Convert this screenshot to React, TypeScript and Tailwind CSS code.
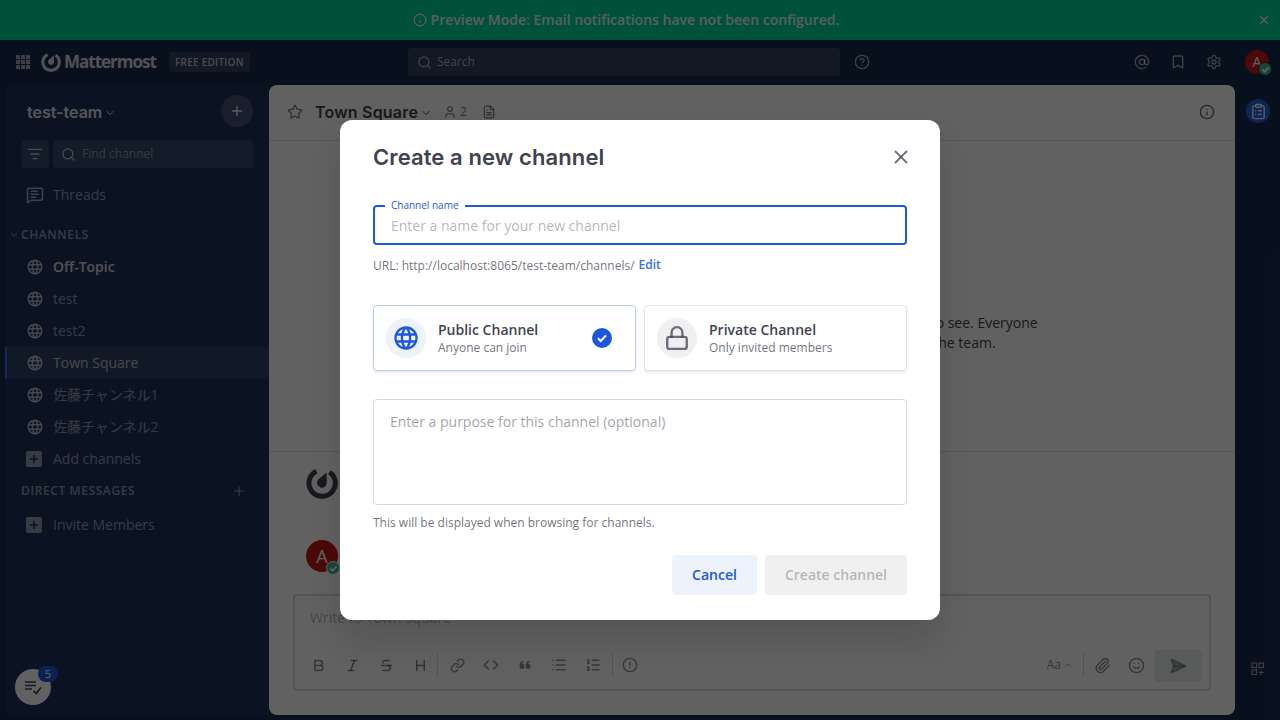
import { AtSign, Bold, Bookmark, ChevronDown, ChevronUp, CircleAlert, CircleHelp, ClipboardList, Code, FileText, Heading, Info, Italic, Link, List, ListFilter, ListOrdered, Lock, MessageSquareText, Paperclip, Plus, Search, SendHorizontal, Settings, Smile, Star, Strikethrough, User, X } from 'lucide-react';
import { MdFormatQuote } from 'react-icons/md';

const GLOBE = 'M16.36,14C16.44,13.34 16.5,12.68 16.5,12C16.5,11.32 16.44,10.66 16.36,10H19.74C19.9,10.64 20,11.31 20,12C20,12.69 19.9,13.36 19.74,14M14.59,19.56C15.19,18.45 15.65,17.25 15.97,16H18.92C17.96,17.65 16.43,18.93 14.59,19.56M14.34,14H9.66C9.56,13.34 9.5,12.68 9.5,12C9.5,11.32 9.56,10.65 9.66,10H14.34C14.43,10.65 14.5,11.32 14.5,12C14.5,12.68 14.43,13.34 14.34,14M12,19.96C11.17,18.76 10.5,17.43 10.09,16H13.91C13.5,17.43 12.83,18.76 12,19.96M8,8H5.08C6.03,6.34 7.57,5.06 9.4,4.44C8.8,5.55 8.35,6.75 8,8M5.08,16H8C8.35,17.25 8.8,18.45 9.4,19.56C7.57,18.93 6.03,17.65 5.08,16M4.26,14C4.1,13.36 4,12.69 4,12C4,11.31 4.1,10.64 4.26,10H7.64C7.56,10.66 7.5,11.32 7.5,12C7.5,12.68 7.56,13.34 7.64,14M12,4.03C12.83,5.23 13.5,6.57 13.91,8H10.09C10.5,6.57 11.17,5.23 12,4.03M18.92,8H15.97C15.65,6.75 15.19,5.55 14.59,4.44C16.43,5.07 17.96,6.34 18.92,8M12,2C6.47,2 2,6.5 2,12A10,10 0 0,0 12,22A10,10 0 0,0 22,12A10,10 0 0,0 12,2Z';

const Globe = ({ size, className }: { size: number; className?: string }) => (
    <svg width={size} height={size} viewBox="0 0 24 24" fill="currentColor" className={className}>
        <path d={GLOBE} />
    </svg>
);

// ring with a gap at the top, drop in the middle
const MattermostLogo = ({ size, className }: { size: number; className?: string }) => (
    <svg width={size} height={size} viewBox="0 0 32 32" fill="none" className={className}>
        <path d="M10.5 4.2 A13.2 13.2 0 1 0 23.5 5.2" stroke="currentColor" strokeWidth="5" strokeLinecap="butt" />
        <path d="M20.5 5.5 L20.8 15 A4.9 4.9 0 1 1 12.2 12.6 Z" fill="currentColor" />
    </svg>
);

const AppsGrid = () => (
    <svg width="14" height="14" viewBox="0 0 14 14" fill="currentColor">
        {[0, 5, 10].map((y) => [0, 5, 10].map((x) => <rect key={`${x}-${y}`} x={x} y={y} width="4" height="4" rx="0.5" />))}
    </svg>
);

const AppsPlus = () => (
    <svg width="14" height="14" viewBox="0 0 14 14" fill="none" stroke="currentColor" strokeWidth="1.1">
        <rect x="1" y="1" width="4.5" height="4.5" />
        <rect x="8" y="1" width="4.5" height="4.5" />
        <rect x="1" y="8" width="4.5" height="4.5" />
        <path d="M10.2 8v5M7.8 10.5h5" />
    </svg>
);

const TodoIcon = () => (
    <svg width="20" height="20" viewBox="0 0 20 20" fill="none" stroke="currentColor" strokeWidth="1.6">
        <path d="M2 5h11M2 8.5h11M2 12h7" />
        <path d="M10.5 14l2.6 2.6L18 10.5" />
    </svg>
);

const StatusCheck = ({ className }: { className: string }) => (
    <span className={`absolute w-[14px] h-[14px] rounded-full bg-[#3db887] border flex items-center justify-center ${className}`}>
        <svg width="9" height="9" viewBox="0 0 10 10" fill="none" stroke="#fff" strokeWidth="2"><path d="M1.5 5l2.5 2.5 4.5-5" /></svg>
    </span>
);

const PlusBox = () => (
    <span className="w-4 h-4 rounded-[2px] bg-white/50 flex items-center justify-center text-[#1e325c]">
        <Plus size={12} strokeWidth={3} />
    </span>
);

const channels = ['Off-Topic', 'test', 'test2', 'Town Square', '佐藤チャンネル1', '佐藤チャンネル2'];

const Sidebar = () => (
    <div className="w-[264px] ml-[5px] bg-[#1e325c] rounded-tl-lg rounded-bl-lg flex flex-col relative text-white/50 text-sm">
        <div className="h-[54px] flex items-center justify-between pl-[22px] pr-[16px]">
            <div className="flex items-center gap-[2px] text-white/85 text-[16px] font-semibold font-['Inter',sans-serif]">
                test-team <ChevronDown size={12} strokeWidth={2} className="mt-[2px]" />
            </div>
            <div className="w-8 h-8 rounded-full bg-white/15 flex items-center justify-center text-white/90 mt-[-2px]">
                <Plus size={16} />
            </div>
        </div>
        <div className="flex gap-1 pl-4 pr-4 mt-[1px]">
            <div className="w-7 h-7 rounded bg-white/10 flex items-center justify-center text-white/70">
                <ListFilter size={16} />
            </div>
            <div className="flex-1 h-7 rounded bg-white/10 flex items-center gap-[6px] pl-2 text-xs text-white/45">
                <Search size={15} className="text-white/70" /> Find channel
            </div>
        </div>
        <div className="h-8 mt-[11px] flex items-center pl-[21px] gap-[9px]">
            <MessageSquareText size={18} className="text-white/60" />
            <span>Threads</span>
        </div>
        <div className="h-[22px] mt-[13px] flex items-center pl-[4px] text-xs font-semibold tracking-[0.6px]">
            <ChevronDown size={10} strokeWidth={2.5} className="mr-[2px]" /> CHANNELS
        </div>
        <div className="flex flex-col mt-[5px]">
            {channels.map((name) => (
                <div
                    key={name}
                    className={`h-8 flex items-center gap-[9px] ${name === 'Town Square' ? 'bg-white/8 border-l-2 border-[#386fe5] pl-[19px] text-white/65' : 'pl-[21px]'} ${name === 'Off-Topic' ? 'font-semibold text-white/80' : ''}`}
                >
                    <Globe size={18} className="text-white/65" />
                    <span className="mt-[-1px]">{name}</span>
                </div>
            ))}
            <div className="h-8 flex items-center pl-[21px] gap-[11px]">
                <PlusBox /> <span>Add channels</span>
            </div>
        </div>
        <div className="h-8 flex items-center justify-between pl-[16px] pr-[22px] text-xs font-semibold tracking-[0.6px]">
            DIRECT MESSAGES <Plus size={16} strokeWidth={1.5} />
        </div>
        <div className="h-8 mt-[2px] flex items-center pl-[21px] gap-[11px]">
            <PlusBox /> <span>Invite Members</span>
        </div>
        <div className="absolute left-[10px] bottom-[10px] w-9 h-9 rounded-full bg-white flex items-center justify-center text-[#3f4350]">
            <TodoIcon />
            <span className="absolute left-[23px] top-[-3px] w-5 h-4 rounded-full bg-[#1c58d9] text-white text-[11px] flex items-center justify-center">5</span>
        </div>
    </div>
);

const toolGroupA = [Bold, Italic, Strikethrough, Heading];

const Composer = () => (
    <div className="mx-6 mb-6 h-[97px] shrink-0 border-2 border-[#3f4350]/20 rounded flex flex-col justify-between pb-[7px] pl-[6px] pr-[7px]">
        <div className="pt-[12px] pl-[9px] text-sm text-[#3f4350]/40">Write to Town Square</div>
        <div className="flex items-center h-8 text-[#3f4350]/60">
            <div className="flex-1 flex items-center mb-[2px]">
                {toolGroupA.map((Icon, i) => (
                    <span key={i} className="w-[34px] flex justify-center"><Icon size={15} strokeWidth={2.5} /></span>
                ))}
                <span className="w-px h-6 bg-[#3f4350]/20" />
                <span className="ml-[2px] w-[34px] flex justify-center"><Link size={15} strokeWidth={2.2} /></span>
                <span className="w-[34px] flex justify-center"><Code size={16} strokeWidth={2.2} /></span>
                <span className="w-[34px] flex justify-center"><MdFormatQuote size={18} className="rotate-180" /></span>
                <span className="w-[34px] flex justify-center"><List size={16} strokeWidth={2.2} /></span>
                <span className="w-[34px] flex justify-center"><ListOrdered size={16} strokeWidth={2.2} /></span>
                <span className="ml-[2px] w-px h-6 bg-[#3f4350]/20" />
                <span className="w-[34px] flex justify-center"><CircleAlert size={16} /></span>
                <div className="flex-1" />
                <span className="text-xs mr-[2px]">Aa</span>
                <ChevronUp size={10} />
                <span className="w-px h-6 bg-[#3f4350]/20 ml-[10px]" />
                <span className="w-[36px] flex justify-center"><Paperclip size={17} /></span>
                <span className="w-[32px] flex justify-center"><Smile size={17} /></span>
            </div>
            <span className="w-12 h-8 ml-[2px] rounded bg-[#3f4350]/10 flex items-center justify-center text-[#3f4350]/40">
                <SendHorizontal size={18} fill="currentColor" />
            </span>
        </div>
    </div>
);

const CenterChannel = () => (
    <div className="flex-1 min-w-0 bg-white rounded-lg flex flex-col overflow-hidden text-[#3f4350]">
        <div className="h-[56px] shrink-0 border-b border-[#3f4350]/15 flex items-center pl-[18px] pr-[20px] pb-[1px]">
            <Star size={16} className="text-[#3f4350]/70" />
            <span className="ml-[12px] text-[16px] font-semibold tracking-[0.2px] font-['Inter',sans-serif]">Town Square</span>
            <ChevronDown size={12} strokeWidth={2} className="ml-[2px] mt-[2px]" />
            <User size={14} className="ml-[11px] text-[#3f4350]/70" />
            <span className="ml-[3px] text-xs text-[#3f4350]/70">2</span>
            <FileText size={14} className="ml-[15px] text-[#3f4350]/70" />
            <div className="flex-1" />
            <Info size={16} className="text-[#3f4350]/80" />
        </div>
        <div className="h-[311px] shrink-0 border-b border-[#3f4350]/15 pl-[197px] pt-[172px] text-sm leading-5 whitespace-nowrap">
            <p>Welcome to Town Square! Post messages here that you want everyone to see. Everyone</p>
            <p className="ml-[-33px]">automatically becomes a permanent member of this channel when they join the team.</p>
        </div>
        <div className="flex-1 min-h-0 pl-[37px] pt-[15px] flex flex-col">
            <MattermostLogo size={32} className="text-[#3f4350]" />
            <div className="relative w-8 h-8 mt-[41px] rounded-full bg-[#c41a1a] text-white flex items-center justify-center text-[18px]">
                A
                <StatusCheck className="right-[-2px] bottom-[-3px] border-white" />
            </div>
        </div>
        <Composer />
    </div>
);

const Modal = () => (
    <div className="w-[600px] h-[500px] bg-white rounded-xl shadow-[0_20px_32px_rgba(0,0,0,0.12)] px-[33px] text-[#3f4350] flex flex-col">
        <div className="h-[75px] shrink-0 flex items-center justify-between">
            <h1 className="text-[22px] font-semibold font-['Inter',sans-serif] tracking-[0.1px]">Create a new channel</h1>
            <X size={22} className="text-[#3f4350]/75 mr-[-5px] mt-[-1px]" />
        </div>
        <div className="relative mt-[10px] h-10 shrink-0 border-2 border-[#1c58d9] rounded flex items-center pl-4 pt-[2px] text-sm text-[#3f4350]/40">
            Enter a name for your new channel
            <span className="absolute left-[10px] top-[-9px] px-[6px] bg-white text-[10px] leading-[14px] text-[#1c58d9]">Channel name</span>
        </div>
        <div className="mt-[12px] h-[18px] flex items-center text-xs text-[#3f4350]/75">
            URL: http://localhost:8065/test-team/channels/
            <span className="ml-1 mt-[-2px] font-semibold text-[#386fe5]">Edit</span>
        </div>
        <div className="mt-[30px] grid grid-cols-2 gap-2 h-[66px] shrink-0">
            <div className="border border-[#1c58d9]/30 rounded shadow-[0_2px_3px_rgba(0,0,0,0.08)] flex items-center pl-3 pr-[23px]">
                <span className="w-10 h-10 rounded-full bg-[#1c58d9]/8 flex items-center justify-center text-[#1c58d9]">
                    <Globe size={28} />
                </span>
                <div className="ml-3 flex-1">
                    <div className="text-sm font-semibold leading-5">Public Channel</div>
                    <div className="text-xs leading-4 text-[#3f4350]/75">Anyone can join</div>
                </div>
                <span className="w-5 h-5 rounded-full bg-[#1c58d9] flex items-center justify-center">
                    <svg width="12" height="12" viewBox="0 0 12 12" fill="none" stroke="#fff" strokeWidth="2"><path d="M2 6.2l2.8 2.8L10 3.4" /></svg>
                </span>
            </div>
            <div className="border border-[#3f4350]/15 rounded shadow-[0_2px_3px_rgba(0,0,0,0.08)] flex items-center pl-3">
                <span className="w-10 h-10 rounded-full bg-[#3f4350]/8 flex items-center justify-center text-[#3f4350]/75">
                    <Lock size={26} strokeWidth={2.2} />
                </span>
                <div className="ml-3">
                    <div className="text-sm font-semibold leading-5">Private Channel</div>
                    <div className="text-xs leading-4 text-[#3f4350]/75">Only invited members</div>
                </div>
            </div>
        </div>
        <div className="mt-[28px] h-[106px] shrink-0 border border-[#3f4350]/20 rounded pl-4 pt-[12px] text-sm leading-5 text-[#3f4350]/50">
            Enter a purpose for this channel (optional)
        </div>
        <div className="mt-[10px] h-4 text-xs leading-4 text-[#3f4350]/75">This will be displayed when browsing for channels.</div>
        <div className="mt-6 flex justify-end gap-2 text-sm font-semibold">
            <div className="w-[85px] h-10 rounded bg-[#1c58d9]/8 text-[#1c58d9] flex items-center justify-center">Cancel</div>
            <div className="w-[142px] h-10 rounded bg-[#3f4350]/8 text-[#3f4350]/35 flex items-center justify-center">Create channel</div>
        </div>
    </div>
);

export default function App() {
    return (
        <div className="relative w-[1280px] h-[720px] overflow-hidden bg-[#192a4d] flex flex-col font-['Open_Sans','Noto_Sans_CJK_JP',sans-serif]">
            {/* Preview banner */}
            <div className="h-10 shrink-0 bg-[#00d596] flex items-center justify-center relative text-white text-sm font-semibold pr-[28px]">
                <span className="flex items-center gap-[4px] opacity-90">
                    <Info size={14} /> Preview Mode: Email notifications have not been configured.
                </span>
                <X size={14} className="absolute right-[9px] opacity-90" strokeWidth={2.5} />
            </div>

            {/* Global header */}
            <div className="h-[45px] shrink-0 flex items-center text-white/60 pl-4 pr-[11px] pb-[1px]">
                <span className="w-[25px] flex"><AppsGrid /></span>
                <MattermostLogo size={20} className="text-white/80" />
                <span className="ml-[3px] text-[17px] font-bold tracking-[-1px] text-white/80">Mattermost</span>
                <span className="ml-[13px] h-5 w-[81px] rounded bg-white/10 flex items-center justify-center text-[10px] font-semibold tracking-[0.25px] text-white/70">FREE EDITION</span>
                <div className="ml-[158px] w-[432px] h-7 rounded bg-white/10 flex items-center gap-[5px] pl-[9px] text-xs">
                    <Search size={15} /> Search
                </div>
                <CircleHelp size={16} className="ml-[14px]" />
                <div className="flex-1" />
                <AtSign size={16} />
                <Bookmark size={16} className="ml-5" />
                <Settings size={16} className="ml-5" />
                <div className="relative ml-[23px] w-6 h-6 rounded-full bg-[#c41a1a] text-white text-sm flex items-center justify-center">
                    A
                    <StatusCheck className="right-[-3px] bottom-[-2px] border-[#192a4d]" />
                </div>
            </div>

            {/* Body */}
            <div className="flex-1 min-h-0 flex pb-[5px]">
                <Sidebar />
                <CenterChannel />
                <div className="w-[45px] shrink-0 flex flex-col items-center justify-between pt-[14px] pb-[39px] pl-[1px] text-white/60">
                    <span className="w-6 h-6 rounded-full bg-[#2762d9] flex items-center justify-center text-white/90">
                        <ClipboardList size={17} />
                    </span>
                    <AppsPlus />
                </div>
            </div>

            {/* Backdrop + modal */}
            <div className="absolute inset-0 bg-black/[0.62] flex justify-center pt-[120px]">
                <Modal />
            </div>
        </div>
    );
}
